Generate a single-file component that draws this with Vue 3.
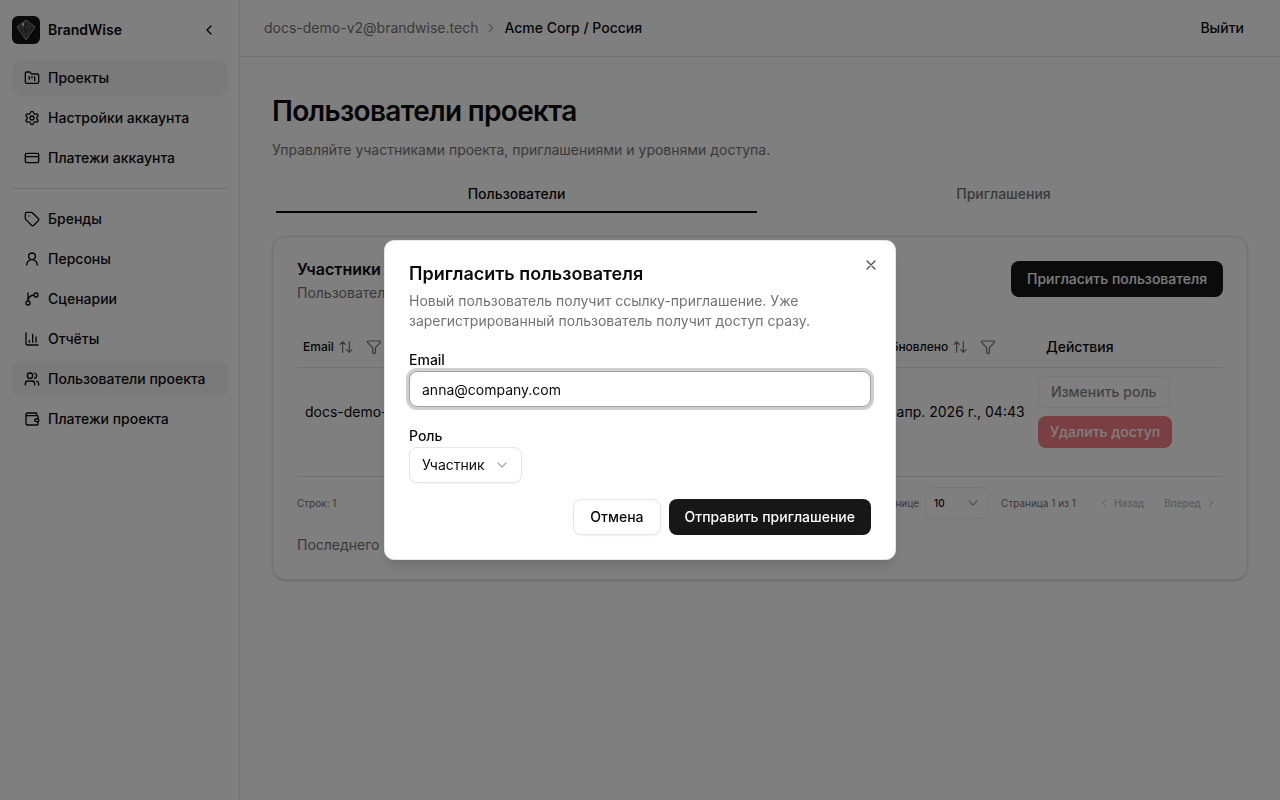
<script setup>
import { ref } from 'vue'

const email = ref('anna@company.com')
const role = ref('member')
const pageSize = ref('10')

const accountLinks = [
  { title: 'Проекты', icon: 'folder', active: true },
  { title: 'Настройки аккаунта', icon: 'settings' },
  { title: 'Платежи аккаунта', icon: 'card' }
]

const projectLinks = [
  { title: 'Бренды', icon: 'tag' },
  { title: 'Персоны', icon: 'user' },
  { title: 'Сценарии', icon: 'branch' },
  { title: 'Отчёты', icon: 'chart' },
  { title: 'Пользователи проекта', icon: 'users', active: true },
  { title: 'Платежи проекта', icon: 'wallet' }
]

const columns = ['Email', 'Роль', 'Добавлено', 'Обновлено']

const icons = {
  folder: 'M4 20h16a2 2 0 0 0 2-2V8a2 2 0 0 0-2-2h-7.93a2 2 0 0 1-1.66-.9l-.82-1.2A2 2 0 0 0 7.93 3H4a2 2 0 0 0-2 2v13c0 1.1.9 2 2 2ZM8 10v4M12 10v2M16 10v6',
  settings: 'M9.67 4.14a2.34 2.34 0 0 1 4.66 0 2.34 2.34 0 0 0 3.32 1.91 2.34 2.34 0 0 1 2.33 4.04 2.34 2.34 0 0 0 0 3.83 2.34 2.34 0 0 1-2.33 4.03 2.34 2.34 0 0 0-3.32 1.92 2.34 2.34 0 0 1-4.66 0 2.34 2.34 0 0 0-3.32-1.92 2.34 2.34 0 0 1-2.33-4.03 2.34 2.34 0 0 0 0-3.83 2.34 2.34 0 0 1 2.33-4.04 2.34 2.34 0 0 0 3.32-1.91M15 12a3 3 0 1 1-6 0 3 3 0 0 1 6 0',
  card: 'M4 5h16a2 2 0 0 1 2 2v10a2 2 0 0 1-2 2H4a2 2 0 0 1-2-2V7a2 2 0 0 1 2-2ZM2 10h20',
  tag: 'M12.59 2.59A2 2 0 0 0 11.17 2H4a2 2 0 0 0-2 2v7.17a2 2 0 0 0 .59 1.42l8.7 8.7a2.43 2.43 0 0 0 3.42 0l6.58-6.58a2.43 2.43 0 0 0 0-3.42ZM7.5 7.5h.01',
  user: 'M17 8a5 5 0 1 1-10 0 5 5 0 0 1 10 0M20 21a8 8 0 0 0-16 0',
  branch: 'M6 3v12M21 6a3 3 0 1 1-6 0 3 3 0 0 1 6 0M9 18a3 3 0 1 1-6 0 3 3 0 0 1 6 0M15 6a9 9 0 0 0-9 9',
  chart: 'M3 3v16a2 2 0 0 0 2 2h16M18 17V9M13 17V5M8 17v-3',
  users: 'M16 21v-2a4 4 0 0 0-4-4H6a4 4 0 0 0-4 4v2M13 7a4 4 0 1 1-8 0 4 4 0 0 1 8 0M22 21v-2a4 4 0 0 0-3-3.87M16 3.13a4 4 0 0 1 0 7.75',
  wallet: 'M19 7V4a1 1 0 0 0-1-1H5a2 2 0 0 0 0 4h15a1 1 0 0 1 1 1v4h-3a2 2 0 0 0 0 4h3a1 1 0 0 0 1-1v-2a1 1 0 0 0-1-1M3 5v14a2 2 0 0 0 2 2h15a1 1 0 0 0 1-1v-4'
}
</script>

<template>
  <div class="layout">
    <aside class="sidebar">
      <div class="brand">
        <svg class="logo" viewBox="0 0 28 28" fill="none">
          <rect width="28" height="28" rx="6" fill="#141414" />
          <path d="M14 4 23 11 14 24 5 11Z" fill="#3c3c3c" stroke="#b0b0b0" stroke-width=".8" stroke-linejoin="round" />
          <path d="M14 4 10.500 11 14 24l3.500-13ZM5 11h18" stroke="#777" stroke-width=".6" />
          <path d="m10 8 2-1.500v3h-2Z" fill="#e5e5e5" />
        </svg>
        <span class="brand-name">BrandWise</span>
        <button type="button" class="collapse" aria-label="Свернуть меню">
          <svg class="icon" viewBox="0 0 24 24"><path d="m15 18-6-6 6-6" /></svg>
        </button>
      </div>
      <nav class="nav">
        <a v-for="link in accountLinks" :key="link.title" href="#" class="nav-link" :class="{ active: link.active }">
          <svg class="icon" viewBox="0 0 24 24"><path :d="icons[link.icon]" /></svg>
          {{ link.title }}
        </a>
      </nav>
      <hr class="separator" />
      <nav class="nav">
        <a v-for="link in projectLinks" :key="link.title" href="#" class="nav-link" :class="{ active: link.active }">
          <svg class="icon" viewBox="0 0 24 24"><path :d="icons[link.icon]" /></svg>
          {{ link.title }}
        </a>
      </nav>
    </aside>

    <div class="content">
      <header class="topbar">
        <div class="breadcrumbs">
          <a href="#" class="crumb">docs-demo-v2@brandwise.tech</a>
          <svg class="icon small faded" viewBox="0 0 24 24"><path d="m9 18 6-6-6-6" /></svg>
          <span class="crumb current">Acme Corp / Россия</span>
        </div>
        <button type="button" class="logout">Выйти</button>
      </header>

      <main class="main">
        <h1>Пользователи проекта</h1>
        <p class="lead">Управляйте участниками проекта, приглашениями и уровнями доступа.</p>

        <div class="tabs" role="tablist">
          <button type="button" role="tab" class="tab selected" aria-selected="true">Пользователи</button>
          <button type="button" role="tab" class="tab" aria-selected="false">Приглашения</button>
        </div>

        <section class="card">
          <div class="card-header">
            <div>
              <h2>Участники</h2>
              <p class="muted">Пользователи</p>
            </div>
            <button type="button" class="btn primary">Пригласить пользователя</button>
          </div>

          <table>
            <thead>
              <tr>
                <th v-for="column in columns" :key="column">
                  <div class="th-tools">
                    <button type="button" class="sort">
                      {{ column }}
                      <svg class="icon thin" viewBox="0 0 24 24"><path d="m3 8 4-4 4 4M7 4v16M21 16l-4 4-4-4M17 20V4" /></svg>
                    </button>
                    <button type="button" class="filter" aria-label="Фильтр">
                      <svg class="icon thin" viewBox="0 0 24 24"><path d="M10 20a1 1 0 0 0 .553.895l2 1A1 1 0 0 0 14 21v-7a2 2 0 0 1 .517-1.341L21.740 4.670A1 1 0 0 0 21 3H3a1 1 0 0 0-.742 1.670l7.225 7.989A2 2 0 0 1 10 14z" /></svg>
                    </button>
                  </div>
                </th>
                <th class="actions-head">Действия</th>
              </tr>
            </thead>
            <tbody>
              <tr>
                <td>docs-demo-v2@brandwise.tech</td>
                <td>Владелец</td>
                <td>9 апр. 2026 г., 04:43</td>
                <td>9 апр. 2026 г., 04:43</td>
                <td>
                  <div class="actions">
                    <button type="button" class="btn outline compact" disabled>Изменить роль</button>
                    <button type="button" class="btn danger compact" disabled>Удалить доступ</button>
                  </div>
                </td>
              </tr>
            </tbody>
          </table>

          <div class="pagination">
            <span class="rows">Строк: 1</span>
            <label for="page-size">Строк на странице</label>
            <div class="select-box page-size">
              <select id="page-size" v-model="pageSize">
                <option value="10">10</option>
              </select>
              <svg class="icon faded" viewBox="0 0 24 24"><path d="m6 9 6 6 6-6" /></svg>
            </div>
            <span class="page-info">Страница 1 из 1</span>
            <div class="pager">
              <button type="button" class="page-btn" disabled>
                <svg class="icon tiny" viewBox="0 0 24 24"><path d="m15 18-6-6 6-6" /></svg>
                Назад
              </button>
              <button type="button" class="page-btn" disabled>
                Вперед
                <svg class="icon tiny" viewBox="0 0 24 24"><path d="m9 18 6-6-6-6" /></svg>
              </button>
            </div>
          </div>
          <p class="muted">Последнего администратора проекта удалить нельзя.</p>
        </section>
      </main>
    </div>

    <div class="overlay">
      <form class="dialog" role="dialog" aria-labelledby="dialog-title" @submit.prevent>
        <button type="button" class="close" aria-label="Закрыть">
          <svg class="icon" viewBox="0 0 24 24"><path d="M18 6 6 18M6 6l12 12" /></svg>
        </button>
        <div class="dialog-header">
          <h2 id="dialog-title">Пригласить пользователя</h2>
          <p class="muted">Новый пользователь получит ссылку-приглашение. Уже зарегистрированный пользователь получит доступ сразу.</p>
        </div>
        <div class="field">
          <label for="invite-email">Email</label>
          <input id="invite-email" v-model="email" type="email" class="input" />
        </div>
        <div class="field">
          <label for="invite-role">Роль</label>
          <div class="select-box">
            <select id="invite-role" v-model="role">
              <option value="member">Участник</option>
            </select>
            <svg class="icon faded" viewBox="0 0 24 24"><path d="m6 9 6 6 6-6" /></svg>
          </div>
        </div>
        <div class="dialog-footer">
          <button type="button" class="btn outline">Отмена</button>
          <button type="submit" class="btn primary">Отправить приглашение</button>
        </div>
      </form>
    </div>
  </div>
</template>

<style>
body {
  margin: 0;
  background: #fff;
}
</style>

<style scoped>
.layout {
  display: flex;
  min-height: 100vh;
  font-family: Inter, "Liberation Sans", sans-serif;
  font-size: 14px;
  line-height: 20px;
  color: #0a0a0a;
}

.layout * {
  box-sizing: border-box;
}

h1,
h2,
p {
  margin: 0;
}

button,
input,
select {
  margin: 0;
  font: inherit;
  color: inherit;
}

button {
  display: inline-flex;
  align-items: center;
  justify-content: center;
  padding: 0;
  border: none;
  background: none;
  white-space: nowrap;
}

a {
  color: inherit;
  text-decoration: none;
}

.icon {
  flex: none;
  width: 16px;
  height: 16px;
  fill: none;
  stroke: currentColor;
  stroke-width: 2;
  stroke-linecap: round;
  stroke-linejoin: round;
}

.icon.small {
  width: 14px;
  height: 14px;
}

.icon.tiny {
  width: 12px;
  height: 12px;
}

.icon.thin {
  color: #737373;
  stroke-width: 1.8;
}

.faded {
  color: #737373;
  opacity: 0.6;
}

.muted {
  color: #737373;
}

/* sidebar */
.sidebar {
  flex: none;
  width: 240px;
  padding: 16px 11px 16px 12px;
  border-right: 1px solid #e5e5e5;
}

.brand {
  display: flex;
  align-items: center;
  gap: 8px;
  height: 28px;
  margin-bottom: 16px;
}

.logo {
  width: 28px;
  height: 28px;
}

.brand-name {
  flex: 1;
  font-weight: 600;
}

.collapse {
  width: 28px;
  height: 28px;
  margin-right: 5px;
}

.nav {
  display: flex;
  flex-direction: column;
  gap: 4px;
}

.nav-link {
  display: flex;
  align-items: center;
  gap: 8px;
  height: 36px;
  padding: 0 12px;
  border-radius: 8px;
  font-weight: 500;
}

.nav-link.active {
  background: #f5f5f5;
}

.separator {
  height: 1px;
  margin: 12px 0;
  border: none;
  background: #e5e5e5;
}

/* page */
.content {
  flex: 1;
  min-width: 0;
}

.topbar {
  display: flex;
  align-items: center;
  justify-content: space-between;
  height: 57px;
  padding: 0 24px;
  border-bottom: 1px solid #e5e5e5;
}

.breadcrumbs {
  display: flex;
  align-items: center;
  gap: 6px;
}

.crumb {
  color: #737373;
}

.current {
  color: #0a0a0a;
  font-weight: 500;
}

.logout {
  height: 32px;
  padding: 0 12px;
  font-weight: 500;
}

.main {
  padding: 36px 32px;
}

h1 {
  font-size: 28px;
  line-height: 36px;
  font-weight: 600;
  letter-spacing: -0.025em;
}

.lead {
  margin-top: 11px;
  color: #737373;
}

.tabs {
  display: flex;
  gap: 6px;
  margin: 16px 0 23px;
  padding: 0 4px;
}

.tab {
  flex: 1;
  height: 37px;
  border-bottom: 2px solid transparent;
  color: #737373;
  font-weight: 500;
}

.tab.selected {
  border-bottom-color: #0a0a0a;
  color: #0a0a0a;
}

.card {
  padding: 24px;
  border: 1px solid #e5e5e5;
  border-radius: 14px;
  box-shadow: 0 1px 3px rgba(0, 0, 0, 0.1), 0 1px 2px rgba(0, 0, 0, 0.1);
}

.card-header {
  display: flex;
  align-items: flex-start;
  justify-content: space-between;
  margin-bottom: 24px;
}

.card-header h2 {
  margin-bottom: 6px;
  font-size: 16px;
  line-height: 16px;
  font-weight: 600;
}

.btn {
  height: 36px;
  padding: 0 16px;
  border-radius: 8px;
  font-weight: 500;
}

.btn.primary {
  background: #171717;
  color: #fafafa;
}

.btn.outline {
  border: 1px solid #e5e5e5;
  background: #fff;
  box-shadow: 0 1px 2px rgba(0, 0, 0, 0.05);
}

.btn.danger {
  background: #e7000b;
  color: #fff;
}

.btn.compact {
  height: 32px;
  padding: 0 12px;
}

.btn:disabled {
  opacity: 0.5;
}

/* members table */
table {
  width: 100%;
  border-collapse: collapse;
  table-layout: fixed;
}

th {
  height: 40px;
  padding: 0 6px;
  border-bottom: 1px solid #e5e5e5;
  font-weight: 500;
  text-align: left;
}

th:first-child {
  width: 25%;
}

th:nth-child(4) {
  width: 154px;
}

.actions-head {
  width: 193px;
  padding-left: 16px;
}

td {
  padding: 8px;
  white-space: nowrap;
}

.th-tools {
  display: flex;
  align-items: center;
  gap: 12px;
}

.sort {
  gap: 4px;
  font-size: 12px;
}

.actions {
  display: flex;
  flex-direction: column;
  align-items: flex-start;
  gap: 8px;
}

.pagination {
  display: flex;
  align-items: center;
  margin: 20px 0 16px;
  padding-top: 10px;
  border-top: 1px solid #e5e5e5;
  color: #737373;
  font-size: 10px;
}

.rows {
  flex: 1;
}

.page-info {
  margin: 0 16px 0 12px;
}

.pager {
  display: flex;
  gap: 8px;
}

.page-btn {
  gap: 4px;
  height: 28px;
  padding: 0 6px;
  font-weight: 500;
  opacity: 0.5;
}

/* select with its own chevron */
.select-box {
  display: inline-grid;
  align-items: center;
}

.select-box select,
.select-box .icon {
  grid-area: 1 / 1;
}

.select-box select {
  appearance: none;
  height: 36px;
  padding: 0 36px 0 12px;
  border: 1px solid #e5e5e5;
  border-radius: 8px;
  background: #fff;
  box-shadow: 0 1px 2px rgba(0, 0, 0, 0.05);
}

.select-box .icon {
  justify-self: end;
  margin-right: 12px;
  pointer-events: none;
}

.page-size {
  margin-left: 6px;
}

.page-size select {
  width: 64px;
  height: 32px;
  padding: 0 8px;
  border-color: #efefef;
  box-shadow: none;
  color: #0a0a0a;
  font-weight: 500;
}

.page-size .icon {
  margin-right: 8px;
}

/* invite dialog */
.overlay {
  position: fixed;
  inset: 0;
  display: flex;
  align-items: center;
  justify-content: center;
  background: rgba(0, 0, 0, 0.5);
}

.dialog {
  position: relative;
  display: flex;
  flex-direction: column;
  gap: 16px;
  width: 100%;
  max-width: 512px;
  padding: 24px;
  border: 1px solid #e5e5e5;
  border-radius: 10px;
  background: #fff;
  box-shadow: 0 10px 15px -3px rgba(0, 0, 0, 0.1), 0 4px 6px -4px rgba(0, 0, 0, 0.1);
}

.dialog-header h2 {
  margin-bottom: 8px;
  font-size: 18px;
  line-height: 18px;
  font-weight: 600;
}

.close {
  position: absolute;
  top: 16px;
  right: 16px;
  opacity: 0.7;
}

.field label {
  display: block;
  padding-top: 2px;
  line-height: 22px;
  font-weight: 500;
}

.input {
  display: block;
  width: 100%;
  height: 36px;
  padding: 0 12px;
  border: 1px solid #a1a1a1;
  border-radius: 8px;
  outline: none;
  background: #fff;
  box-shadow: 0 0 0 3px rgba(161, 161, 161, 0.5);
}

.dialog-footer {
  display: flex;
  justify-content: flex-end;
  gap: 8px;
}
</style>
